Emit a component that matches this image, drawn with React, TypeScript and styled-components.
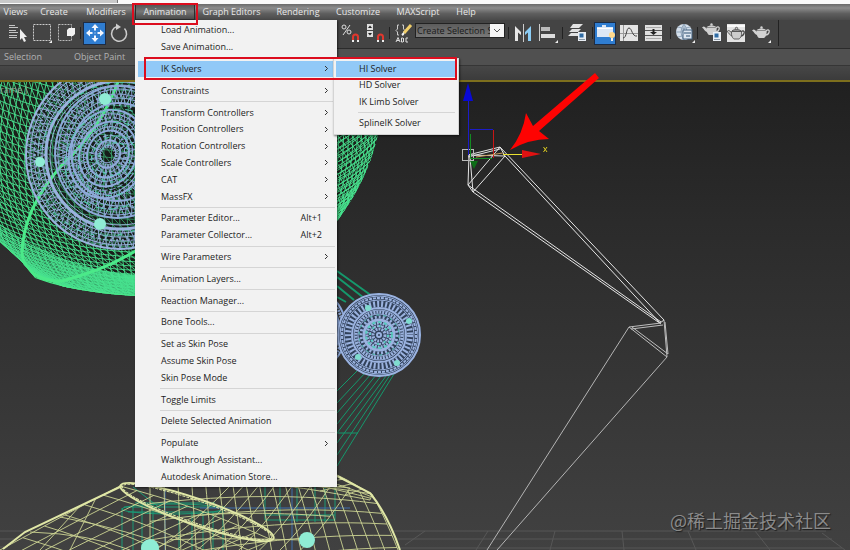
import React from "react";
import styled, { createGlobalStyle, css } from "styled-components";

const GlobalStyle = createGlobalStyle`
  * { box-sizing: border-box; }
  body { margin: 0; background: #2c2c2c; overflow: hidden; }
  button, select { font: inherit; color: inherit; border: 0; padding: 0; background: none; }
  ul { list-style: none; margin: 0; padding: 0; }
`;

const Page = styled.div`
  position: relative;
  display: flex;
  flex-direction: column;
  min-height: 100vh;
  overflow: hidden;
  font-family: "Open Sans", "Noto Sans", sans-serif;
  font-size: 9px;
  line-height: 12px;
`;

const TitleStrip = styled.div`
  height: 4px;
  background: #fafafa;
`;

const TitleTab = styled.div`
  width: 118px;
  height: 3px;
  background: #c9c9c9;
  border-right: 1px solid #777;
`;

const MenuBar = styled.nav`
  display: flex;
  height: 16px;
  padding-right: 8px;
  background: linear-gradient(#6a6a6a, #8c8c8c 25%, #5e5e5e 60%, #494949);
  color: #e8e8e8;
`;

const MenuSlot = styled.div`
  position: relative;
  display: flex;
`;

const MenuTitle = styled.button<{ $width: number; $open?: boolean }>`
  width: ${(p) => p.$width}px;
  height: 16px;
  white-space: nowrap;
  text-align: center;
  ${(p) =>
    p.$open &&
    css`
      background: linear-gradient(#555, #777 45%, #4a4a4a);
      border: 1px solid #2c2c2c;
    `}
`;

const panel = css`
  position: absolute;
  display: flex;
  flex-direction: column;
  background: #f2f2f2;
  color: #1c1c1c;
  box-shadow: 1px 1px 2px rgba(0, 0, 0, 0.55);
`;

const DropMenu = styled.ul`
  ${panel}
  z-index: 2;
  top: 100%;
  left: 0;
  width: 202px;
  height: 467px;
  padding: 2px 2px 2px 3px;
`;

const SubMenu = styled.ul`
  ${panel}
  top: -3px;
  left: 195px;
  width: 126px;
  height: 77px;
  padding: 2px 3px 2px 2px;
  border: 1px solid #d4d4d4;
`;

const MenuRow = styled.li`
  position: relative;
  display: flex;
  flex: 1 1 17px;
  min-height: 0;
`;

const MenuCommand = styled.button<{ $active?: boolean }>`
  display: flex;
  flex: 1;
  align-items: center;
  justify-content: space-between;
  padding: 0 6px 0 23px;
  white-space: nowrap;
  background: ${(p) => (p.$active ? "#91c9f7" : "transparent")};
`;

const Shortcut = styled.span`
  padding-right: 7px;
`;

const Divider = styled.li`
  flex: none;
  height: 1px;
  margin: 2px 0 2px 22px;
  background: #d5d5d5;
`;

const Toolbar = styled.div`
  display: flex;
  height: 29px;
  padding-bottom: 2px;
  background: #444;
  border-bottom: 1px solid #2b2b2b;
`;

const ToolGroup = styled.div<{ $width?: number; $edge?: boolean }>`
  display: flex;
  flex: none;
  align-items: center;
  padding-left: 4px;
  ${(p) => p.$width && `width: ${p.$width}px;`}
  ${(p) => p.$edge && "border-right: 1px solid #222; padding-left: 2px; padding-right: 4px;"}
`;

const Tool = styled.button<{ $width: number; $on?: boolean }>`
  display: flex;
  align-items: center;
  justify-content: center;
  width: ${(p) => p.$width}px;
  height: 23px;
  ${(p) => p.$on && "background: #2f7dd1; outline: 1px solid #1d2c44; outline-offset: -1px;"}
`;

const ToolGap = styled.i<{ $width: number }>`
  display: flex;
  justify-content: center;
  width: ${(p) => p.$width}px;
  &::after {
    content: "";
    width: 1px;
    height: 12px;
    background: #222;
  }
`;

const Combo = styled.label`
  position: relative;
  display: flex;
  width: 90px;
  height: 15px;
  margin: 0 1px 5px;
  border: 1px solid #222;
  background: linear-gradient(#5c5c5c, #787878);
  color: #1a1a1a;
  select {
    appearance: none;
    width: 84px;
    padding-left: 1px;
    overflow: hidden;
    white-space: nowrap;
    border-radius: 0;
  }
  svg {
    position: absolute;
    right: 0;
    top: 0;
    pointer-events: none;
  }
`;

const RibbonTabs = styled.div`
  display: flex;
  align-items: center;
  gap: 32px;
  height: 17px;
  padding-left: 4px;
  background: #505050;
  border-bottom: 1px solid #363636;
  color: #b2b2b2;
`;

const RibbonStrip = styled.div`
  height: 14px;
  background: linear-gradient(#474747, #3b3b3b);
`;

const Viewport = styled.main`
  position: relative;
  flex: 1;
  display: flex;
  border-top: 2px solid #7d6f1d;
  background: linear-gradient(#202020, #2b2b2b 30%, #414141);
  & > svg {
    width: 100%;
    height: 468px;
    flex: 1;
    overflow: visible;
  }
`;

const ViewLabel = styled.span`
  position: absolute;
  top: 2px;
  left: 0;
  color: #8fa08f;
`;

const Watermark = styled.span`
  position: absolute;
  right: 19px;
  bottom: 18px;
  font: 18px/24px "Noto Sans CJK SC", sans-serif;
  color: #8b8b8b;
  text-shadow: 1px 1px 1px #1c1c1c;
`;

const Callout = styled.div<{ $x: number; $y: number; $w: number; $h: number }>`
  position: absolute;
  z-index: 4;
  left: ${(p) => p.$x}px;
  top: ${(p) => p.$y}px;
  width: ${(p) => p.$w}px;
  height: ${(p) => p.$h}px;
  border: 2px solid #dc0d1e;
  pointer-events: none;
`;

/* ---------- menus ---------- */

type Entry = { label: string; more?: boolean; keys?: string; active?: boolean; sub?: Entry[] } | null;

const solvers: Entry[] = [
  { label: "HI Solver", active: true },
  { label: "HD Solver" },
  { label: "IK Limb Solver" },
  null,
  { label: "SplineIK Solver" },
];

const animationMenu: Entry[] = [
  { label: "Load Animation..." },
  { label: "Save Animation..." },
  null,
  { label: "IK Solvers", more: true, active: true, sub: solvers },
  null,
  { label: "Constraints", more: true },
  null,
  { label: "Transform Controllers", more: true },
  { label: "Position Controllers", more: true },
  { label: "Rotation Controllers", more: true },
  { label: "Scale Controllers", more: true },
  { label: "CAT", more: true },
  { label: "MassFX", more: true },
  null,
  { label: "Parameter Editor...", keys: "Alt+1" },
  { label: "Parameter Collector...", keys: "Alt+2" },
  null,
  { label: "Wire Parameters", more: true },
  null,
  { label: "Animation Layers..." },
  null,
  { label: "Reaction Manager..." },
  null,
  { label: "Bone Tools..." },
  null,
  { label: "Set as Skin Pose" },
  { label: "Assume Skin Pose" },
  { label: "Skin Pose Mode" },
  null,
  { label: "Toggle Limits" },
  null,
  { label: "Delete Selected Animation" },
  null,
  { label: "Populate", more: true },
  { label: "Walkthrough Assistant..." },
  { label: "Autodesk Animation Store..." },
];

const Chevron = () => (
  <svg width="5" height="7" viewBox="0 0 5 7" fill="none" stroke="#333">
    <path d="M1 1L3.5 3.5L1 6" />
  </svg>
);

const Entries = ({ items }: { items: Entry[] }) => (
  <>
    {items.map((e, i) =>
      e === null ? (
        <Divider key={i} role="separator" />
      ) : (
        <MenuRow key={i}>
          <MenuCommand $active={e.active}>
            {e.label}
            {e.keys && <Shortcut>{e.keys}</Shortcut>}
            {e.more && <Chevron />}
          </MenuCommand>
          {e.sub && (
            <SubMenu>
              <Entries items={e.sub} />
            </SubMenu>
          )}
        </MenuRow>
      )
    )}
  </>
);

const titles: [string, number][] = [
  ["Views", 31],
  ["Create", 46],
  ["Modifiers", 58],
  ["Animation", 60],
  ["Graph Editors", 73],
  ["Rendering", 60],
  ["Customize", 60],
  ["MAXScript", 60],
  ["Help", 36],
];

/* ---------- toolbar icons ---------- */

const Icon = ({ w = 20, children }: { w?: number; children: React.ReactNode }) => (
  <svg width={w} height="20" viewBox={`0 0 ${w} 20`} fill="none">
    {children}
  </svg>
);

const Magnet = ({ x }: { x: number }) => (
  <g>
    <path d={`M${x} 18V14a2.5 2.5 0 0 1 5 0V18`} stroke="#e0382e" strokeWidth="2" />
    <path d={`M${x - 1} 18h2M${x + 4} 18h2`} stroke="#eee" strokeWidth="2" />
  </g>
);

const Teapot = ({ fill, line = "none" }: { fill: string; line?: string }) => (
  <g fill={fill} stroke={line} strokeWidth="0.800">
    <path d="M15 8C17 6 19 7 18 9.500C17.500 11 16 12 14.500 12" fill="none" stroke={line === "none" ? fill : line} strokeWidth="1.300" />
    <path d="M6 12C3.500 11.500 3.500 9 1 7.500L2.500 6.500C5 7 5 9 6.500 9Z" />
    <path d="M5.500 7.500C5 12 7 14.500 8 15H13C14.500 14 16 12 15.500 7.500Z" />
    <path d="M6 7C7.500 5 13.500 5 15 7Z" />
    <circle cx="10.500" cy="4.500" r="1.200" />
  </g>
);

const Badge = ({ x, y }: { x: number; y: number }) => (
  <g>
    <rect x={x} y={y} width="8" height="9" fill="#e9eef4" />
    <rect x={x + 1.5} y={y + 1.5} width="4" height="4" fill="#2f6ca5" />
    <path d={`M${x + 1} ${y + 7.500}h6`} stroke="#8899aa" />
  </g>
);

const Corner = () => <path d="M20 17V20H17Z" fill="#eee" />;

const LeftTools = () => (
  <ToolGroup $width={335}>
    <Tool $width={26} aria-label="Select by name">
      <Icon>
        <path d="M2 2.500h6M2 4.500h9M2 7.500h7M2 9.500h9M2 12.500h8M2 14.500h8" stroke="#c4c4c4" />
        <path d="M13 6V17L15 15L17 19L19 18L17 14H20Z" fill="#eee" />
      </Icon>
    </Tool>
    <Tool $width={24} aria-label="Rectangular region">
      <Icon>
        <path d="M1.500 1.500H18.500V17.500H1.500Z" stroke="#ccc" strokeDasharray="2 1" />
        <Corner />
      </Icon>
    </Tool>
    <Tool $width={24} aria-label="Window crossing">
      <Icon w={18}>
        <path d="M1.500 1.500H14.500V17.500H1.500Z" stroke="#bbb" strokeDasharray="2 1" />
        <path d="M10 7L12 5H18V11L16 13H10Z" fill="#f2f2f2" />
      </Icon>
    </Tool>
    <ToolGap $width={5} />
    <Tool $width={23} $on aria-label="Move">
      <Icon>
        <path d="M10 1L13.500 5H11V7.500H9V5H6.500ZM10 19L13.500 15H11V12.500H9V15H6.500ZM1 10L5 6.500V9H7.500V11H5V13.500ZM19 10L15 6.500V9H12.500V11H15V13.500ZM9.500 9.500h1v1h-1z" fill="#f3f7ff" />
      </Icon>
    </Tool>
    <Tool $width={26} aria-label="Rotate">
      <Icon>
        <path d="M15.500 5.500A7.500 7.500 0 1 1 8 3.500" stroke="#ccc" strokeWidth="1.500" />
        <path d="M7 0.500L12 4L7 7Z" fill="#ccc" />
      </Icon>
    </Tool>
  </ToolGroup>
);

const RightTools = () => (
  <ToolGroup $edge>
    <Tool $width={26} aria-label="Percent snap">
      <Icon>
        <circle cx="4" cy="4" r="2" stroke="#ddd" />
        <circle cx="9" cy="9" r="2" stroke="#ddd" />
        <path d="M10 2L3 12" stroke="#ddd" />
        <Magnet x={13} />
      </Icon>
    </Tool>
    <Tool $width={24} aria-label="Spinner snap">
      <Icon>
        <path d="M2 1H8V7H2ZM2 8H8V14H2Z" fill="#ddd" />
        <path d="M3 5L5 2.500L7 5ZM3 10L5 12.500L7 10Z" fill="#222" />
        <Magnet x={13} />
      </Icon>
    </Tool>
    <ToolGap $width={5} />
    <Tool $width={22} aria-label="Edit named selection sets">
      <Icon>
        <path d="M6 2H4.500V6L3 7.500L4.500 9V12H6M9 2H10.500V6L12 7.500L10.500 9V12H9" stroke="#ccc" />
        <path d="M18 2L11 10" stroke="#f1cf6a" strokeWidth="3" />
        <path d="M11 10L9 12" stroke="#eee" strokeWidth="2" />
        <path d="M3 19L5 14.500L7 19M4 17.500H6M8.500 15V19H10L11 18L10 17L11 16L10 15ZM15 15H13V19H15" stroke="#ddd" />
      </Icon>
    </Tool>
    <Combo>
      <select aria-label="Named selection sets">
        <option>Create Selection Set</option>
      </select>
      <svg width="14" height="13" viewBox="0 0 14 13">
        <rect width="14" height="13" fill="#f5f5f5" />
        <path d="M4 5L7 8L10 5" fill="none" stroke="#555" />
      </svg>
    </Combo>
    <ToolGap $width={5} />
    <Tool $width={23} aria-label="Mirror">
      <Icon>
        <path d="M2 3L8 9V12L5 9.500V18H2Z" fill="#e8e8e8" />
        <path d="M10.500 1V19" stroke="#ccc" />
        <path d="M18 3L12 9V12L15 9.500V18H18Z" fill="#8ccdf5" />
      </Icon>
    </Tool>
    <Tool $width={27} aria-label="Align">
      <Icon>
        <path d="M1.500 1V18" stroke="#ccc" />
        <path d="M3 4H12V8H3Z" fill="#bbb" />
        <path d="M3 11H17V15H3Z" fill="#ddd" />
        <Corner />
      </Icon>
    </Tool>
    <ToolGap $width={3} />
    <Tool $width={26} aria-label="Layer explorer">
      <Icon>
        <path d="M6 1L16 1L12 5H3ZM5 6H14L11 9H2ZM4 10H11V13H1Z" fill="#e2e2e2" />
        <Badge x={11} y={9} />
      </Icon>
    </Tool>
    <ToolGap $width={4} />
    <Tool $width={22} $on aria-label="Toggle ribbon">
      <Icon>
        <path d="M2 4H7V2H11V4H18V14H2Z" fill="#dce7f5" />
        <path d="M2 5.500h16" stroke="#fff" />
        <circle cx="17" cy="12" r="3" fill="#ffd98c" />
        <path d="M16 15h2v3h-2z" fill="#eee" />
      </Icon>
    </Tool>
    <Tool $width={26} aria-label="Curve editor">
      <Icon>
        <rect x="1" y="2" width="18" height="16" fill="#e4e4e4" />
        <path d="M4.500 2V18M1 10.500H19" stroke="#999" />
        <path d="M4 15C8 15 7 5 10 5S13 14 18 13" stroke="#444" />
      </Icon>
    </Tool>
    <Tool $width={24} aria-label="Schematic view">
      <Icon>
        <rect x="1" y="2" width="17" height="16" fill="#e0e0e0" />
        <path d="M1 7.500H18M1 12.500H18" stroke="#555" />
        <path d="M2 4.500H17M2 15.500H17" stroke="#aaa" />
        <path d="M9.500 6V10" stroke="#222" strokeWidth="2" />
        <path d="M6 9H13L9.500 12Z" fill="#222" />
      </Icon>
    </Tool>
    <ToolGap $width={8} />
    <Tool $width={21} aria-label="Material editor">
      <Icon>
        <circle cx="9" cy="9" r="8" fill="#d5e0ec" />
        <path d="M1 9H17M9 1V17M3 4Q9 7 15 4M3 14Q9 11 15 14M9 1Q3 9 9 17M9 1Q15 9 9 17" stroke="#8ea3b8" />
        <rect x="8" y="7" width="9" height="9" fill="#dce6f0" stroke="#43617f" />
        <path d="M9 10h7M11 13h4" stroke="#2d4e71" />
        <Corner />
      </Icon>
    </Tool>
    <ToolGap $width={5} />
    <Tool $width={23} aria-label="Render setup">
      <Icon>
        <g transform="translate(-1 -3)"><Teapot fill="#cfcfcf" /></g>
        <Badge x={11} y={9} />
      </Icon>
    </Tool>
    <Tool $width={25} aria-label="Rendered frame">
      <Icon>
        <rect x="1" y="1" width="18" height="18" fill="#e3e3e3" />
        <path d="M1 3h18" stroke="#fafafa" strokeWidth="2" />
        <g transform="translate(0 1)"><Teapot fill="#cdcdcd" line="#444" /></g>
      </Icon>
    </Tool>
    <Tool $width={26} aria-label="Render">
      <Icon>
        <Teapot fill="#d2d2d2" />
        <Corner />
      </Icon>
    </Tool>
  </ToolGroup>
);

/* ---------- viewport drawing ---------- */

const range = (n: number) => Array.from({ length: n }, (_, i) => i);
type P = [number, number];
const f = (n: number) => n.toFixed(1);

const quad = (a: P, b: P, c: P, t: number): P => [
  (1 - t) * (1 - t) * a[0] + 2 * t * (1 - t) * b[0] + t * t * c[0],
  (1 - t) * (1 - t) * a[1] + 2 * t * (1 - t) * b[1] + t * t * c[1],
];

const polyline = (pts: P[]) => "M" + pts.map((p) => `${f(p[0])} ${f(p[1])}`).join("L");

/* A ruled surface between two quadratic curves, as one path. */
const patch = (top: [P, P, P], bottom: [P, P, P], cols: number, rows: number, bulge = 0) => {
  const at = (u: number, v: number): P => {
    const a = quad(...top, u);
    const b = quad(...bottom, u);
    return [a[0] + (b[0] - a[0]) * v, a[1] + (b[1] - a[1]) * v - bulge * Math.sin(Math.PI * v)];
  };
  return (
    range(cols + 1).map((i) => polyline(range(9).map((k) => at(i / cols, k / 8)))).join("") +
    range(rows + 1).map((j) => polyline(range(13).map((k) => at(k / 12, j / rows)))).join("")
  );
};

/* Latitudes, meridians and their diagonals on the front of a tilted sphere. */
const sphereMesh = () => {
  let d = "";
  const cx = 158, cy = 66, r = 240;
  const tilt = 0.5;
  const pt = (lat: number, lon: number): P => {
    const x = Math.cos(lat) * Math.sin(lon);
    const y = Math.sin(lat);
    const z = Math.cos(lat) * Math.cos(lon);
    return [cx + r * x, cy + r * (y * Math.cos(tilt) + z * Math.sin(tilt))];
  };
  const step = Math.PI / 96;
  for (let i = -24; i <= 48; i++) {
    d += polyline(range(61).map((k) => pt(i * step, -1.57 + (k * 3.14) / 60)));
  }
  for (let j = -48; j <= 48; j++) {
    d += polyline(range(31).map((k) => pt(-0.8 + k * 0.079, j * step)));
    d += polyline(range(31).map((k) => pt(-0.8 + k * 0.079, j * step + k * 0.06)));
  }
  return d;
};

/* Zigzag band between two radii, used for the triangulated faces of a disc. */
const zigzag = (cx: number, cy: number, r1: number, r2: number, n: number, squash = 1) =>
  polyline(
    range(n * 2 + 1).map((k) => {
      const a = (k * Math.PI) / n;
      const r = k % 2 ? r1 : r2;
      return [cx + r * squash * Math.cos(a), cy + r * Math.sin(a)];
    })
  );

type Ring = [number, number, string];

const Rings = ({ cx, cy, rings, color, squash = 1, turn = 0 }: { cx: number; cy: number; rings: Ring[]; color: string; squash?: number; turn?: number }) => (
  <g fill="none" stroke={color} transform={`rotate(${turn} ${cx} ${cy})`}>
    {rings.map(([r, w, dash], i) => (
      <ellipse key={i} cx={cx} cy={cy} rx={r * squash} ry={r} strokeWidth={w} strokeDasharray={dash} />
    ))}
  </g>
);

const bigRings: Ring[] = [
  [94, 2, "none"], [90, 1, "none"], [86, 1, "5 2"], [82, 1, "7 1"], [78, 1, "none"], [74, 3, "none"], [70, 1, "none"],
];
const midRings: Ring[] = [
  [66, 2, "none"], [63, 1, "none"], [58, 1, "9 2"], [54, 1, "none"], [49, 2, "none"],
];
const coreRings: Ring[] = [
  [45, 2, "none"], [41, 1, "none"], [37, 1, "6 2"], [33, 2, "none"], [28, 1, "none"], [24, 2, "none"], [19, 1, "5 2"], [14, 2, "none"], [9, 1, "none"],
];
const wheelRings: Ring[] = [
  [41, 2, "none"], [39, 1, "none"], [37, 2, "3 1"], [35, 1, "none"], [31, 6, "2 2"], [27, 2, "none"], [25, 1, "none"], [23, 3, "2 1"], [21, 1, "none"], [18, 3, "2 2"], [15, 3, "none"], [12, 3, "2 1"], [9, 2, "3 1"], [6, 3, "2 1"], [2, 2, "none"],
];

const bolts: [number, number, number][] = [
  [105, 99, 6], [40, 162, 5], [100, 224, 6], [150, 548, 9], [307, 540, 8],
];
const smallBolts: P[] = [[368, 308], [409, 321], [358, 357], [397, 363]];

const Scene = () => (
  <svg viewBox="0 82 850 468" preserveAspectRatio="xMinYMin slice" fill="none" aria-label="Perspective viewport">
    <defs>
      <clipPath id="ball">
        <path d="M0 82H383C384 140 365 183 338 220L300 262C250 295 180 299 135 296C100 294 60 288 35 278L22 262L0 242Z" />
      </clipPath>
    </defs>

    <path
      d="M0 531H26M0 539H18M0 547H8M392 531H826M396 539H832M398 548H842M425 531L405 545M488 531L476 550M555 531L550 550M622 531L624 550M688 531L696 550M755 531L770 550M822 533L845 550"
      stroke="#575757"
    />

    <g clipPath="url(#ball)">
      <rect y="82" width="390" height="220" fill="#1a1f1a" />
      <path d={sphereMesh()} stroke="#48e28e" strokeWidth="0.900" />
      <ellipse cx="120" cy="155" rx="94" ry="94" fill="#15161c" fillOpacity="0.350" />
      <path d="M118 82Q100 130 62 165Q22 210 22 255Q28 282 62 281Q105 270 137 250" stroke="#4be989" strokeWidth="3" />
      <path d="M22 262Q34 279 60 282" stroke="#4be989" strokeWidth="3" />
      <path d="M0 242L22 262L35 278Q80 294 137 296" stroke="#4be989" strokeWidth="2" />
      <g stroke="#8ea6d2">
        <path d={zigzag(120, 155, 94, 84, 90)} />
        <path d={zigzag(120, 155, 85, 74, 74)} />
        <path d={zigzag(118, 152, 66, 55, 58, 0.950)} />
        <path d={zigzag(117, 152, 57, 46, 50, 0.950)} />
        <path d={zigzag(110, 155, 46, 36, 40, 0.850)} />
        <path d={zigzag(106, 153, 35, 22, 30, 0.850)} />
        <path d={zigzag(108, 156, 22, 8, 20, 0.850)} />
      </g>
      <Rings cx={120} cy={155} rings={bigRings} color="#9ab2de" />
      <Rings cx={118} cy={152} rings={midRings} color="#8da9d8" squash={0.95} turn={12} />
      <Rings cx={108} cy={154} rings={coreRings} color="#8fabdb" squash={0.85} turn={22} />
      <Rings cx={114} cy={159} rings={[[24, 1, "5 4"], [17, 1, "4 3"], [38, 1, "6 5"], [52, 1, "8 5"], [80, 1, "5 9"]]} color="#55c9b0" squash={0.9} turn={40} />
    </g>

    <g stroke="#15986c">
      <path d="M337 271L372 296M337 277L364 298M337 286L354 300M337 297L346 302" strokeWidth="2" />
      <path d="M337 391L360 368M337 403L366 372M337 413L371 374M337 424L376 375M337 433L381 376M337 443L386 376M337 455L390 375M337 466L394 374M337 433H358" />
    </g>
    <Rings cx={300} cy={330} rings={[[46, 2, "none"], [43, 3, "2 1"], [39, 3, "none"]]} color="#8aa5d6" />
    <circle cx="379" cy="335" r="42" fill="#31415a" />
    <Rings cx={379} cy={335} rings={wheelRings} color="#9bb3e0" />
    <Rings cx={379} cy={335} rings={[[13, 2, "3 3"], [20, 1, "3 4"], [9, 2, "2 5"]]} color="#59cdbf" />
    <g fill="#7fdccf">
      {smallBolts.map(([x, y]) => (
        <circle key={x} cx={x} cy={y} r="3" />
      ))}
    </g>

    <g stroke="#1a9a76">
      <path d="M122 508V550M133 505V550M142 505V550M153 505V550M179 512V550M192 512V550M203 512V550M213 512V550M223 508V550" />
      <path d="M124 507H225M128 512H222M135 503H215M133 487L160 508M265 487V520H335V487M280 487V522M297 487V522M315 487V522M325 487V522M265 515H335" />
      <ellipse cx="172" cy="509" rx="50" ry="5" />
    </g>
    <path d="M165 488V550M292 487V550M200 508H350" stroke="#3e6fae" />

    <g stroke="#cdd593" strokeWidth="0.900">
      <path d={patch([[120, 486], [70, 512], [0, 550]], [[272, 540], [200, 570], [130, 600]], 6, 9, 4)} />
      <path d="M60 517Q130 530 180 550M30 532Q90 534 130 550M80 506L40 550M96 498L70 550" />
      <path d={patch([[150, 486], [270, 476], [372, 494]], [[150, 600], [290, 566], [402, 560]], 17, 6, 3)} />
      <path d={patch([[230, 486], [280, 480], [350, 488]], [[140, 560], [220, 560], [290, 560]], 7, 3, -5)} />
      <path d={patch([[337, 475], [352, 482], [372, 495]], [[270, 484], [320, 490], [370, 500]], 4, 3)} />
    </g>
    <g stroke="#e0e7a6">
      <ellipse cx="197" cy="512" rx="81" ry="13" transform="rotate(19 197 512)" strokeWidth="2" />
      <ellipse cx="197" cy="512" rx="79" ry="11" transform="rotate(19 197 512)" strokeDasharray="3 1" />
      <path d="M3 549L25 532L122 486M337 476L370 493Q388 515 400 550" strokeWidth="2" />
    </g>

    <g fill="#8fecd4">
      {bolts.map(([x, y, r], i) => (
        <circle key={i} cx={x} cy={y} r={r} />
      ))}
    </g>

    <g stroke="#e4e4e4">
      <path d="M468 155L500 147L505 156L469 155L468 185L473 192L505 156M468 157L500 149M468 185L500 147M470 157L473 192" />
      <path d="M500 147L664 320L660 323L505 156M473 192L661 324M468 185L661 322" />
      <path d="M661 323L629 327L667 357L664 320M663 325L631 329M632 327L668 354L665 322" stroke="#bdbdbd" />
      <path d="M629 327L487 550M667 357L497 550" stroke="#b4b4b4" />
      <rect x="462.500" y="149.500" width="11" height="11" stroke="#bbb" />
    </g>

    <path d="M468.500 100V155M470 129.500H493" stroke="#1c1cc8" />
    <path d="M463 101L468 83L473 101Z" fill="#0909d5" />
    <path d="M493.500 130V158" stroke="#c81616" />
    <path d="M470.500 134V158.500H492" stroke="#138a22" />
    <path d="M470 161L474 169L478 161Z" fill="#0d6d17" />
    <path d="M476 157L503 153" stroke="#c79a5a" />
    <path d="M503 154.500H523" stroke="#e8e030" />
    <path d="M522 150L541 154L522 158Z" fill="#e01212" />
    <path d="M543.500 147L547 152M547 147L543.500 152" stroke="#d9c820" />

    <path d="M510 150Q523 134 526 113L533 126L595 73L599 78L539 131L549 139Q529 139 510 150Z" fill="#fe0302" />
  </svg>
);

export default function App() {
  return (
    <Page>
      <GlobalStyle />
      <TitleStrip>
        <TitleTab />
      </TitleStrip>
      <MenuBar>
        {titles.map(([name, width]) => (
          <MenuSlot key={name}>
            <MenuTitle $width={width} $open={name === "Animation"}>
              {name}
            </MenuTitle>
            {name === "Animation" && (
              <DropMenu>
                <Entries items={animationMenu} />
              </DropMenu>
            )}
          </MenuSlot>
        ))}
      </MenuBar>
      <Toolbar>
        <LeftTools />
        <RightTools />
      </Toolbar>
      <RibbonTabs>
        <span>Selection</span>
        <span>Object Paint</span>
      </RibbonTabs>
      <RibbonStrip />
      <Viewport>
        <Scene />
        <ViewLabel>rame ]</ViewLabel>
        <Watermark>@稀土掘金技术社区</Watermark>
      </Viewport>
      <Callout $x={132} $y={3} $w={66} $h={22} />
      <Callout $x={144} $y={57} $w={313} $h={23} />
    </Page>
  );
}
